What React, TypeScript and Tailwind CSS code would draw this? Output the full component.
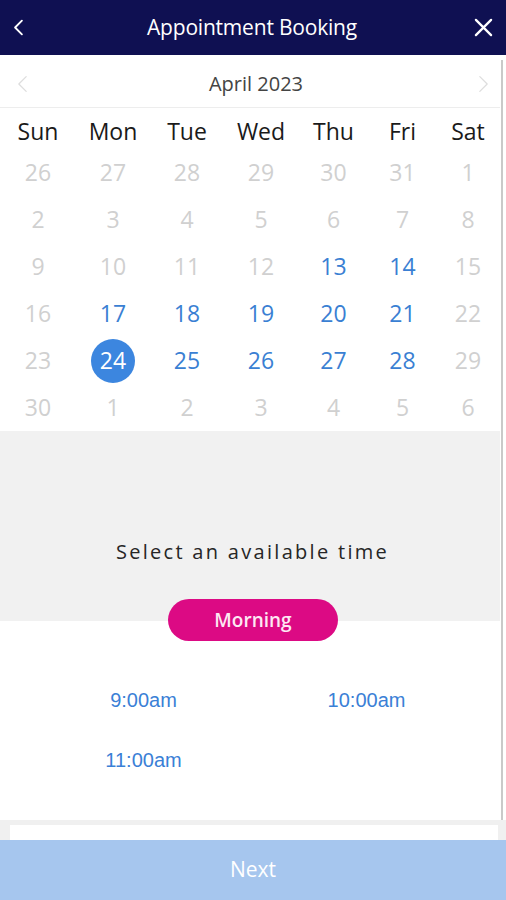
import { useState } from "react";

type Day = { d: number; open?: boolean; muted?: boolean };

const weekDays = ["Sun", "Mon", "Tue", "Wed", "Thu", "Fri", "Sat"];

const weeks: Day[][] = [
  [26, 27, 28, 29, 30, 31, 1].map((d) => ({ d, muted: true })),
  [2, 3, 4, 5, 6, 7, 8].map((d) => ({ d, muted: true })),
  [
    { d: 9, muted: true },
    { d: 10, muted: true },
    { d: 11, muted: true },
    { d: 12, muted: true },
    { d: 13, open: true },
    { d: 14, open: true },
    { d: 15, muted: true },
  ],
  [
    { d: 16, muted: true },
    { d: 17, open: true },
    { d: 18, open: true },
    { d: 19, open: true },
    { d: 20, open: true },
    { d: 21, open: true },
    { d: 22, muted: true },
  ],
  [
    { d: 23, muted: true },
    { d: 24, open: true },
    { d: 25, open: true },
    { d: 26, open: true },
    { d: 27, open: true },
    { d: 28, open: true },
    { d: 29, muted: true },
  ],
  [30, 1, 2, 3, 4, 5, 6].map((d) => ({ d, muted: true })),
];

const slots = ["9:00am", "10:00am", "11:00am"];

const openSans = "font-['Open_Sans','Noto_Sans',sans-serif]";
const cols = "grid grid-cols-[76px_74px_74px_74px_71px_67px_64px]";

function Chevron({ dir, className, width = 2.2 }: { dir: "left" | "right"; className?: string; width?: number }) {
  return (
    <svg viewBox="0 0 12 20" className={className} fill="none" stroke="currentColor" strokeWidth={width} strokeLinecap="round" strokeLinejoin="round">
      {dir === "left" ? <path d="M10 2 2 10l8 8" /> : <path d="M2 2l8 8-8 8" />}
    </svg>
  );
}

export default function App() {
  const [selected, setSelected] = useState(24);

  return (
    <div className={`w-[506px] h-[900px] bg-white overflow-hidden ${openSans}`}>
      <header className="h-[55px] bg-[#0f1052] flex items-center justify-between px-[13px] text-white">
        <Chevron dir="left" className="w-[11px] h-[17px]" />
        <h1 className="text-[21px] leading-none tracking-[-0.2px] ml-[6px]">Appointment Booking</h1>
        <svg viewBox="0 0 20 20" className="w-[19px] h-[19px]" fill="none" stroke="currentColor" strokeWidth={2.4} strokeLinecap="round">
          <path d="M2 2l16 16M18 2 2 18" />
        </svg>
      </header>

      <div className="flex">
        <div className="w-[500px]">
          <div className="h-[53px] pt-[6px] flex items-center justify-between pl-[17px] pr-[11px] border-b border-[#ededed]">
            <Chevron dir="left" className="w-[11px] h-[20px] text-[#dedede]" width={1.4} />
            <span className="text-[20px] text-[#444] ml-[6px]">April 2023</span>
            <Chevron dir="right" className="w-[11px] h-[20px] text-[#dedede]" width={1.4} />
          </div>

          <div className={`${cols} h-[41px] pt-[6px] items-center text-[23px] text-[#1a1a1a]`}>
            {weekDays.map((w) => (
              <span key={w} className="text-center leading-none">
                {w}
              </span>
            ))}
          </div>

          {weeks.map((week, i) => (
            <div key={i} className={`${cols} h-[47px] items-center text-[23px]`}>
              {week.map((day, j) => (
                <div key={j} className="flex justify-center">
                  {day.open && day.d === selected ? (
                    <span className="w-[44px] h-[44px] rounded-full bg-[#3c86df] text-white flex items-center justify-center leading-none">
                      {day.d}
                    </span>
                  ) : (
                    <button
                      onClick={() => day.open && setSelected(day.d)}
                      className={`leading-none ${day.open ? "text-[#3a7fd3]" : "text-[#d0d0d0]"}`}
                    >
                      {day.d}
                    </button>
                  )}
                </div>
              ))}
            </div>
          ))}

          <div className="h-[190px] bg-[#f1f1f1] flex flex-col items-center pt-[108px]">
            <p className="h-[26px] leading-[26px] text-[20px] tracking-[2.3px] text-[#262626] ml-[5px]">Select an available time</p>
            <div className="relative mt-[34px] -mb-[20px] ml-[6px] w-[170px] h-[42px] rounded-full bg-[#dc0a84] flex items-center justify-center text-[19px] font-semibold text-[#fde8f3]">
              Morning
            </div>
          </div>

          <div className="h-[199px] pt-[49px] pl-[32px] pr-[22px] grid grid-cols-2 auto-rows-[60px] font-['Liberation_Sans',Arial,sans-serif] text-[20px] text-[#3a80d6]">
            {slots.map((s) => (
              <div key={s} className="flex items-center justify-center">
                {s}
              </div>
            ))}
          </div>
        </div>
        <div className="w-[6px] pl-[1px]">
          <div className="w-[2px] h-[760px] mt-[5px] bg-[#c9c9c9]" />
        </div>
      </div>

      <div className="h-[20px] bg-[#f0f0f0] pt-[5px] pl-[10px] pr-[8px]">
        <div className="h-full bg-white" />
      </div>

      <button className="w-full h-[60px] bg-[#a6c6ee] text-white text-[21px] flex items-center justify-center">
        Next
      </button>
    </div>
  );
}
